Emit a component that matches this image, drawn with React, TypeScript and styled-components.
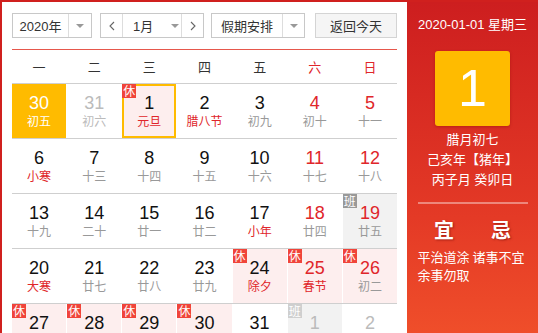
import React from 'react';
import styled, { createGlobalStyle, css } from 'styled-components';

const Global = createGlobalStyle`
  html, body { margin: 0; padding: 0; overflow: hidden; background: #fff; }
  body { font-family: Arial, "Liberation Sans", "Noto Sans CJK SC", sans-serif; }
`;

const RED = '#e0262a';
const ORANGE = '#ffbb00';

const Widget = styled.div`
  display: flex;
  width: 536px;
  height: 360px;
  border-left: 2px solid #d0201e;
  border-top: 2px solid #d0201e;
`;

const Main = styled.div`
  width: 405px;
  box-sizing: border-box;
  padding: 11px 10px 0 10px;
`;

const Toolbar = styled.div`
  display: flex;
  height: 25px;
  font-size: 13px;
  color: #333;
`;

const Box = styled.div<{ $w: number; $ml?: number }>`
  display: flex;
  box-sizing: border-box;
  width: ${(p) => p.$w}px;
  margin-left: ${(p) => p.$ml ?? 0}px;
  height: 25px;
  border: 1px solid #c8c8c8;
  background: #fff;
`;

const Label = styled.div<{ $w: number }>`
  width: ${(p) => p.$w}px;
  display: flex;
  align-items: center;
  justify-content: center;
  border-right: 1px solid #ddd;
`;

const ArrowCell = styled.div`
  flex: 1;
  display: flex;
  align-items: center;
  justify-content: center;
`;

const Caret = styled.span`
  width: 0;
  height: 0;
  border-left: 4px solid transparent;
  border-right: 4px solid transparent;
  border-top: 4px solid #999;
`;

const NavBtn = styled.div<{ $right?: boolean }>`
  width: 21px;
  display: flex;
  align-items: center;
  justify-content: center;
  ${(p) => (p.$right ? css`border-left: 1px solid #ddd;` : css`border-right: 1px solid #ddd;`)}
`;

const MonthMid = styled.div`
  flex: 1;
  display: flex;
  align-items: center;
  padding-left: 10px;
  gap: 18px;
`;

const TodayBtn = styled.div`
  box-sizing: border-box;
  margin-left: 10px;
  width: 82px;
  height: 25px;
  border: 1px solid #d4d4d4;
  background: #f5f5f5;
  display: flex;
  align-items: center;
  justify-content: center;
`;

const Header = styled.div`
  margin-top: 11px;
  box-sizing: border-box;
  height: 35px;
  border-top: 1px solid #e6574c;
  border-bottom: 1px solid #cfcfcf;
  display: grid;
  grid-template-columns: repeat(7, 1fr);
  column-gap: 1px;
  align-items: center;
`;

const WeekName = styled.div<{ $we?: boolean }>`
  text-align: center;
  font-size: 13px;
  color: ${(p) => (p.$we ? RED : '#333')};
  font-family: "Noto Sans CJK SC", sans-serif;
`;

const Row = styled.div`
  display: grid;
  grid-template-columns: repeat(7, 1fr);
  column-gap: 1px;
  border-bottom: 1px solid #cfcfcf;
`;

type Kind = 'normal' | 'today' | 'rest' | 'work' | 'workNext';

const Cell = styled.div<{ $kind: Kind; $sel?: boolean }>`
  position: relative;
  height: 54px;
  box-sizing: border-box;
  padding-top: 9px;
  text-align: center;
  background: ${(p) =>
    p.$kind === 'today'
      ? ORANGE
      : p.$kind === 'rest'
      ? '#fdeeee'
      : p.$kind === 'work' || p.$kind === 'workNext'
      ? '#f2f2f2'
      : '#fff'};
  ${(p) => p.$sel && css`box-shadow: inset 0 0 0 2px ${ORANGE};`}
`;

const Num = styled.div<{ $c: string }>`
  font-size: 18px;
  line-height: 20px;
  color: ${(p) => p.$c};
`;

const Lunar = styled.div<{ $c: string }>`
  font-size: 12px;
  line-height: 16px;
  color: ${(p) => p.$c};
  font-family: "Noto Sans CJK SC", sans-serif;
`;

const Badge = styled.span<{ $bg: string }>`
  position: absolute;
  top: 0;
  left: 0;
  width: 14px;
  height: 14px;
  line-height: 14px;
  font-size: 12px;
  color: #fff;
  background: ${(p) => p.$bg};
  font-family: "Noto Sans CJK SC", sans-serif;
  text-align: center;
`;

const Side = styled.div`
  flex: 1;
  display: flex;
  flex-direction: column;
  align-items: center;
  color: #fff;
  background: linear-gradient(180deg, #cd1e1f 0%, #e43a26 60%, #f2532b 100%);
  font-family: Arial, "Liberation Sans", "Noto Sans CJK SC", sans-serif;
`;

const DateLine = styled.div`
  margin-top: 14px;
  font-size: 13px;
  line-height: 18px;
`;

const BigDay = styled.div`
  margin-top: 17px;
  width: 75px;
  height: 75px;
  border-radius: 3px;
  background: ${ORANGE};
  font-size: 52px;
  line-height: 75px;
  text-align: center;
  box-shadow: 0 1px 3px rgba(120, 0, 0, 0.35);
`;

const InfoLines = styled.div`
  margin-top: 4px;
  font-size: 13px;
  line-height: 20px;
  text-align: center;
`;

const Divider = styled.div`
  margin-top: 12px;
  width: 110px;
  height: 2px;
  background: rgba(255, 255, 255, 0.4);
`;

const YiJi = styled.div`
  margin-top: 13px;
  display: flex;
  gap: 37px;
  font-size: 20px;
  line-height: 26px;
  font-weight: bold;
  text-shadow: 1px 1px 2px rgba(100, 0, 0, 0.5);
  font-family: "Noto Sans CJK SC", sans-serif;
`;

const Advice = styled.div`
  margin-top: 5px;
  width: 110px;
  font-size: 13px;
  line-height: 18px;
  font-family: "Noto Sans CJK SC", sans-serif;
`;

type Day = {
  n: number;
  l: string;
  kind?: Kind;
  we?: boolean;
  fest?: boolean;
  other?: boolean;
  sel?: boolean;
};

const weeks: Day[][] = [
  [
    { n: 30, l: '初五', kind: 'today', other: true },
    { n: 31, l: '初六', other: true },
    { n: 1, l: '元旦', kind: 'rest', fest: true, sel: true },
    { n: 2, l: '腊八节', fest: true },
    { n: 3, l: '初九' },
    { n: 4, l: '初十', we: true },
    { n: 5, l: '十一', we: true },
  ],
  [
    { n: 6, l: '小寒', fest: true },
    { n: 7, l: '十三' },
    { n: 8, l: '十四' },
    { n: 9, l: '十五' },
    { n: 10, l: '十六' },
    { n: 11, l: '十七', we: true },
    { n: 12, l: '十八', we: true },
  ],
  [
    { n: 13, l: '十九' },
    { n: 14, l: '二十' },
    { n: 15, l: '廿一' },
    { n: 16, l: '廿二' },
    { n: 17, l: '小年', fest: true },
    { n: 18, l: '廿四', we: true },
    { n: 19, l: '廿五', we: true, kind: 'work' },
  ],
  [
    { n: 20, l: '大寒', fest: true },
    { n: 21, l: '廿七' },
    { n: 22, l: '廿八' },
    { n: 23, l: '廿九' },
    { n: 24, l: '除夕', fest: true, kind: 'rest' },
    { n: 25, l: '春节', fest: true, we: true, kind: 'rest' },
    { n: 26, l: '初二', we: true, kind: 'rest' },
  ],
  [
    { n: 27, l: '初三', kind: 'rest' },
    { n: 28, l: '初四', kind: 'rest' },
    { n: 29, l: '初五', kind: 'rest' },
    { n: 30, l: '初六', kind: 'rest' },
    { n: 31, l: '初七' },
    { n: 1, l: '初八', other: true, kind: 'workNext' },
    { n: 2, l: '初九', other: true },
  ],
];

const Chevron = ({ right }: { right?: boolean }) => (
  <svg width="6" height="10" viewBox="0 0 6 10">
    <polyline
      points={right ? '1,1 5,5 1,9' : '5,1 1,5 5,9'}
      fill="none"
      stroke="#666"
      strokeWidth="1.1"
    />
  </svg>
);

function DayCell({ d }: { d: Day }) {
  const kind = d.kind ?? 'normal';
  let numC = d.we ? RED : '#111';
  let lunC = d.fest ? RED : '#999';
  if (d.other) {
    numC = '#bbb';
    lunC = '#bbb';
  }
  if (kind === 'today') {
    numC = '#fff';
    lunC = '#fff';
  }
  return (
    <Cell $kind={kind} $sel={d.sel}>
      {kind === 'rest' && <Badge $bg="#f0443a">休</Badge>}
      {kind === 'work' && <Badge $bg="#999">班</Badge>}
      {kind === 'workNext' && <Badge $bg="#cfcfcf">班</Badge>}
      <Num $c={numC}>{d.n}</Num>
      <Lunar $c={lunC}>{d.l}</Lunar>
    </Cell>
  );
}

export default function App() {
  return (
    <>
      <Global />
      <Widget>
        <Main>
          <Toolbar>
            <Box $w={80}>
              <Label $w={55}>2020年</Label>
              <ArrowCell>
                <Caret />
              </ArrowCell>
            </Box>
            <Box $w={104} $ml={8}>
              <NavBtn>
                <Chevron />
              </NavBtn>
              <MonthMid>
                <span>1月</span>
                <Caret />
              </MonthMid>
              <NavBtn $right>
                <Chevron right />
              </NavBtn>
            </Box>
            <Box $w={94} $ml={7}>
              <Label $w={70}>假期安排</Label>
              <ArrowCell>
                <Caret />
              </ArrowCell>
            </Box>
            <TodayBtn>返回今天</TodayBtn>
          </Toolbar>
          <Header>
            {['一', '二', '三', '四', '五', '六', '日'].map((w, i) => (
              <WeekName key={w} $we={i >= 5}>
                {w}
              </WeekName>
            ))}
          </Header>
          {weeks.map((wk, i) => (
            <Row key={i}>
              {wk.map((d, j) => (
                <DayCell key={j} d={d} />
              ))}
            </Row>
          ))}
        </Main>
        <Side>
          <DateLine>2020-01-01 星期三</DateLine>
          <BigDay>1</BigDay>
          <InfoLines>
            <div>腊月初七</div>
            <div>己亥年【猪年】</div>
            <div>丙子月 癸卯日</div>
          </InfoLines>
          <Divider />
          <YiJi>
            <span>宜</span>
            <span>忌</span>
          </YiJi>
          <Advice>
            <div>平治道涂 诸事不宜</div>
            <div>余事勿取</div>
          </Advice>
        </Side>
      </Widget>
    </>
  );
}
